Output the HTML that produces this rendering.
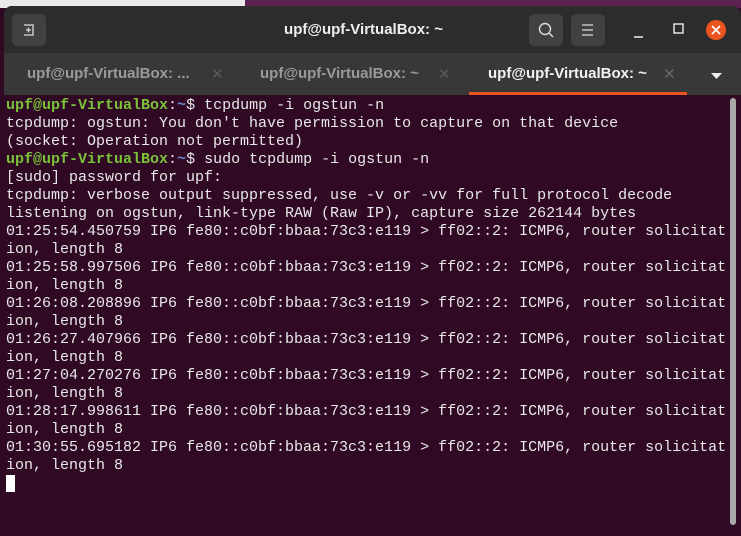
<!DOCTYPE html>
<html><head><style>
*{margin:0;padding:0;box-sizing:border-box}
body{width:741px;height:536px;overflow:hidden;background:#300a24;position:relative;font-family:"Liberation Sans",sans-serif}
.bgL{position:absolute;left:0;top:0;width:245px;height:8px;background:#e9e9e9}
.bgR{position:absolute;left:245px;top:0;width:496px;height:8px;background:#5c2150}
.win{position:absolute;left:4px;top:6px;width:737px;height:530px;background:#300a24;border-radius:8px 8px 0 0;overflow:hidden}
.hdr{position:absolute;left:0;top:0;width:100%;height:47px;background:#2c2c2c}
.title{position:absolute;left:0;width:100%;top:15px;text-align:center;color:#eee;font-weight:bold;font-size:15px;padding-right:18px}
.btn{position:absolute;top:8px;width:34px;height:32px;background:#414141;border-radius:5px}
.tabs{position:absolute;left:0;top:47px;width:100%;height:42px;background:#383838}
.tab{position:absolute;top:12px;font-size:15px;font-weight:bold;color:#9a9a9a}
.term{position:absolute;left:2px;top:91px;font-family:"Liberation Mono",monospace;font-size:15px;line-height:18px;color:#e8e8e8;white-space:pre}
.g{color:#7bc23a;font-weight:bold}.b{color:#6d8bd0;font-weight:bold}
</style></head><body>
<div class="bgL"></div><div class="bgR"></div>
<div class="win">
<div class="hdr">
 <div class="btn" style="left:8px"><svg width="34" height="32"><path d="M12 11h9v10h-9M14 16h5M16.5 13.5v5" stroke="#ddd" stroke-width="1.3" fill="none"/></svg></div>
 <div class="title">upf@upf-VirtualBox: ~</div>
 <div class="btn" style="left:525px"><svg width="34" height="32"><circle cx="16" cy="15" r="5.5" stroke="#ddd" stroke-width="1.4" fill="none"/><path d="M20 19l4 4" stroke="#ddd" stroke-width="1.4"/></svg></div>
 <div class="btn" style="left:567px"><svg width="34" height="32"><path d="M11 11h11M11 16h11M11 21h11" stroke="#ddd" stroke-width="1.3"/></svg></div>
 <svg style="position:absolute;left:620px;top:8px" width="110" height="32"><path d="M10 23h9" stroke="#eee" stroke-width="1.5"/><rect x="50" y="10" width="9" height="9" stroke="#eee" stroke-width="1.4" fill="none"/><circle cx="92" cy="16" r="10" fill="#e95420"/><path d="M88 12l8 8M96 12l-8 8" stroke="#fff" stroke-width="1.6"/></svg>
</div>
<div class="tabs">
 <div class="tab" style="left:23px">upf@upf-VirtualBox: ...</div><div class="tab" style="left:207px;color:#5a5a5a;font-weight:normal">✕</div>
 <div class="tab" style="left:256px">upf@upf-VirtualBox: ~</div><div class="tab" style="left:434px;color:#5a5a5a;font-weight:normal">✕</div>
 <div class="tab" style="left:484px;color:#f2f2f2">upf@upf-VirtualBox: ~</div><div class="tab" style="left:659px;color:#6a6a6a;font-weight:normal">✕</div>
 <svg style="position:absolute;left:706px;top:18px" width="14" height="10"><path d="M1 2h11l-5.5 6z" fill="#eee"/></svg>
 <div style="position:absolute;top:39px;width:218px;height:3px;background:#e95420;left:465px"></div>
</div>
<div style="position:absolute;left:726px;top:92px;width:6px;height:427px;background:#a9a9a9;border-radius:3px"></div>
<div class="term"><span class="g">upf@upf-VirtualBox</span>:<span class="b">~</span>$ tcpdump -i ogstun -n
tcpdump: ogstun: You don't have permission to capture on that device
(socket: Operation not permitted)
<span class="g">upf@upf-VirtualBox</span>:<span class="b">~</span>$ sudo tcpdump -i ogstun -n
[sudo] password for upf: 
tcpdump: verbose output suppressed, use -v or -vv for full protocol decode
listening on ogstun, link-type RAW (Raw IP), capture size 262144 bytes
01:25:54.450759 IP6 fe80::c0bf:bbaa:73c3:e119 > ff02::2: ICMP6, router solicitat
ion, length 8
01:25:58.997506 IP6 fe80::c0bf:bbaa:73c3:e119 > ff02::2: ICMP6, router solicitat
ion, length 8
01:26:08.208896 IP6 fe80::c0bf:bbaa:73c3:e119 > ff02::2: ICMP6, router solicitat
ion, length 8
01:26:27.407966 IP6 fe80::c0bf:bbaa:73c3:e119 > ff02::2: ICMP6, router solicitat
ion, length 8
01:27:04.270276 IP6 fe80::c0bf:bbaa:73c3:e119 > ff02::2: ICMP6, router solicitat
ion, length 8
01:28:17.998611 IP6 fe80::c0bf:bbaa:73c3:e119 > ff02::2: ICMP6, router solicitat
ion, length 8
01:30:55.695182 IP6 fe80::c0bf:bbaa:73c3:e119 > ff02::2: ICMP6, router solicitat
ion, length 8
<span style="background:#fff">&#160;</span></div>
</div>
</body></html>
